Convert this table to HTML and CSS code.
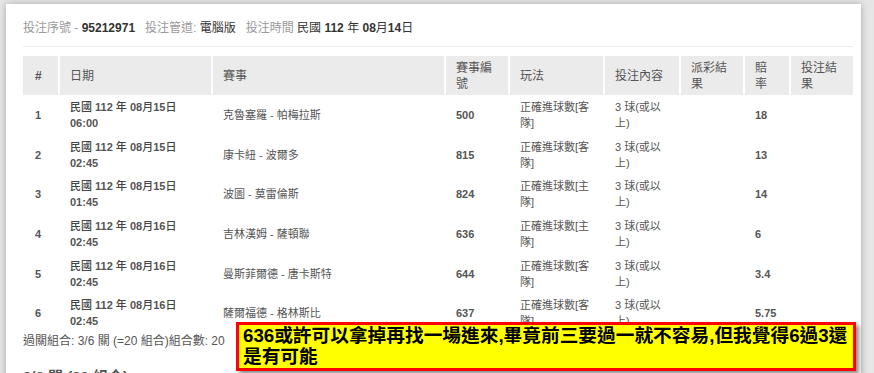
FILE: index.html
```html
<!DOCTYPE html>
<html lang="zh-Hant">
<head>
<meta charset="utf-8">
<title>投注明細</title>
<link rel="stylesheet" href="styles.css">
</head>
<body>
<div class="card">
  <div class="meta"><span class="grp">投注序號 - <b>95212971</b></span><span class="grp">投注管道: <b class="v">電腦版</b></span><span class="grp">投注時間 <b class="v">民國 <b>112</b> 年 <b>08</b>月<b>14</b>日</b></span></div>
  <table class="bets">
    <thead>
      <tr>
        <th class="c-no">#</th>
        <th class="c-date">日期</th>
        <th class="c-match">賽事</th>
        <th class="c-id">賽事編<br>號</th>
        <th class="c-play">玩法</th>
        <th class="c-pick">投注內容</th>
        <th class="c-pay">派彩結<br>果</th>
        <th class="c-odds">賠<br>率</th>
        <th class="c-res">投注結<br>果</th>
      </tr>
    </thead>
    <tbody>
      <tr><td class="b">1</td><td class="d">民國 <b>112</b> 年 <b>08</b>月<b>15</b>日<br><b>06:00</b></td><td>克魯塞羅 - 帕梅拉斯</td><td class="b">500</td><td>正確進球數[客<br>隊]</td><td>3 球(或以<br>上)</td><td></td><td class="b">18</td><td></td></tr>
      <tr><td class="b">2</td><td class="d">民國 <b>112</b> 年 <b>08</b>月<b>15</b>日<br><b>02:45</b></td><td>康卡紐 - 波爾多</td><td class="b">815</td><td>正確進球數[客<br>隊]</td><td>3 球(或以<br>上)</td><td></td><td class="b">13</td><td></td></tr>
      <tr><td class="b">3</td><td class="d">民國 <b>112</b> 年 <b>08</b>月<b>15</b>日<br><b>01:45</b></td><td>波圖 - 莫雷倫斯</td><td class="b">824</td><td>正確進球數[主<br>隊]</td><td>3 球(或以<br>上)</td><td></td><td class="b">14</td><td></td></tr>
      <tr><td class="b">4</td><td class="d">民國 <b>112</b> 年 <b>08</b>月<b>16</b>日<br><b>02:45</b></td><td>吉林漢姆 - 薩頓聯</td><td class="b">636</td><td>正確進球數[主<br>隊]</td><td>3 球(或以<br>上)</td><td></td><td class="b">6</td><td></td></tr>
      <tr><td class="b">5</td><td class="d">民國 <b>112</b> 年 <b>08</b>月<b>16</b>日<br><b>02:45</b></td><td>曼斯菲爾德 - 唐卡斯特</td><td class="b">644</td><td>正確進球數[客<br>隊]</td><td>3 球(或以<br>上)</td><td></td><td class="b">3.4</td><td></td></tr>
      <tr><td class="b">6</td><td class="d">民國 <b>112</b> 年 <b>08</b>月<b>16</b>日<br><b>02:45</b></td><td>薩爾福德 - 格林斯比</td><td class="b">637</td><td>正確進球數[客<br>隊]</td><td>3 球(或以<br>上)</td><td></td><td class="b">5.75</td><td></td></tr>
    </tbody>
  </table>
  <div class="combo">過關組合: 3/6 關 (=20 組合)組合數: 20</div>
  <div class="sub">3/6 關 (20 組合)</div>
</div>
<div class="note">636或許可以拿掉再找一場進來,畢竟前三要過一就不容易,但我覺得6過3還<br>是有可能</div>
</body>
</html>
```

FILE: styles.css
```css
* { box-sizing: border-box; }

html, body {
  margin: 0;
  height: 100%;
  overflow: hidden;
}

body {
  background: #e6e6e6;
  font-family: "Liberation Sans", "Noto Sans CJK TC", sans-serif;
  color: #555;
}

.card {
  margin: 4px 0 0 6px;
  width: 855px;
  height: 420px;
  background: #fff;
  box-shadow: 0 0 7px rgba(0, 0, 0, 0.28);
  padding: 16px 8px 0 17px;
}

.meta {
  font-size: 12px;
  line-height: 16px;
  color: #9a9a9a;
  padding-bottom: 10px;
  border-bottom: 1px solid #ececec;
  white-space: nowrap;
}

.meta .grp { margin-right: 10px; }
.meta b { color: #333; font-weight: bold; }
.meta b.v { font-weight: normal; }
.meta b.v b { font-weight: bold; }

.bets {
  margin-top: 9px;
  width: 830px;
  border-collapse: separate;
  border-spacing: 0;
  table-layout: fixed;
}

.bets th {
  background: #ebebeb;
  color: #555;
  font-weight: normal;
  font-size: 12px;
  line-height: 16px;
  text-align: left;
  vertical-align: middle;
  padding: 3.5px 4px 3.5px 10px;
  border-left: 2px solid #fff;
  white-space: nowrap;
}

.bets th.c-no {
  border-left: 0;
  padding-left: 12px;
  font-weight: bold;
}

.c-no { width: 35px; }
.c-date { width: 153px; }
.c-match { width: 233px; }
.c-id { width: 64px; }
.c-play { width: 95px; }
.c-pick { width: 76px; }
.c-pay { width: 64px; }
.c-odds { width: 46px; }
.c-res { width: 64px; }

.bets td {
  font-size: 11px;
  line-height: 16px;
  color: #555;
  vertical-align: middle;
  padding: 3.85px 4px 3.85px 10px;
  border-left: 2px solid transparent;
  white-space: nowrap;
}

.bets td:first-child {
  border-left: 0;
  padding-left: 12px;
}

.bets td.b { font-weight: bold; }

.bets td.d {
  color: #444;
  font-weight: 500;
}

.bets td.d b { font-weight: bold; color: #555; }

.combo {
  font-size: 12px;
  line-height: 16px;
  color: #555;
}

.sub {
  margin-top: 18px;
  font-size: 15px;
  line-height: 20px;
  font-weight: bold;
  color: #555;
}

.note {
  position: absolute;
  left: 236px;
  top: 322px;
  width: 620px;
  height: 49px;
  background: #ffff00;
  border: 3px solid #ff0000;
  box-shadow: 3px 3px 4px rgba(0, 0, 0, 0.45);
  color: #000;
  font-family: "Liberation Sans", "Noto Sans CJK TC", sans-serif;
  font-weight: bold;
  font-size: 18.7px;
  line-height: 21px;
  padding: 0 4px;
  white-space: nowrap;
  overflow: hidden;
}
```
